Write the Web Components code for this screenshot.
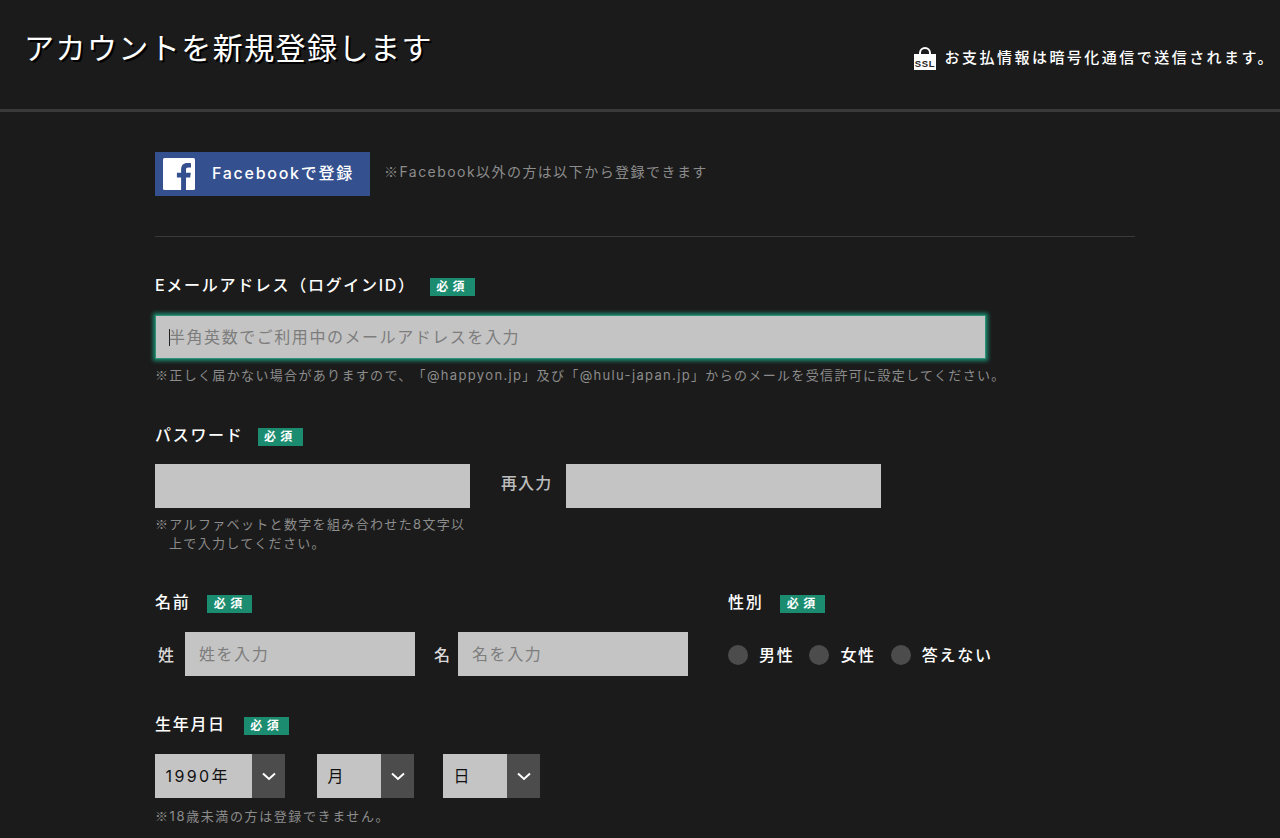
<!DOCTYPE html>
<html lang="ja"><head><meta charset="utf-8"><title>アカウントを新規登録します</title>
<style>
html,body{margin:0;background:#1b1b1b;height:838px;overflow:hidden}
body{font-family:Inter,"Noto Sans CJK JP","Liberation Sans",sans-serif;color:#fff;text-spacing-trim:space-all}
</style></head><body>
<signup-page></signup-page>
<script>
function def(name,css,html){
  customElements.define(name,class extends HTMLElement{
    connectedCallback(){
      if(this.shadowRoot)return;
      const r=this.attachShadow({mode:'open'});
      r.innerHTML='<style>'+css+'</style>'+html;
    }
  });
}
def('req-badge',`:host{display:inline-flex;align-items:center;justify-content:center;box-sizing:border-box;width:45px;height:18px;padding-right:3px;background:#1c8c70;color:#fff;font-size:12px;font-weight:700;letter-spacing:.8px;line-height:18px;flex:none}`,'必 須');
def('field-label',`:host{display:flex;align-items:center;height:18px;font-size:16px;font-weight:500;letter-spacing:1.7px;color:#fff;white-space:nowrap}
span{margin-bottom:6px}
req-badge{margin-left:var(--gap,14px)}`,`<span><slot></slot></span><req-badge></req-badge>`);
def('hint-text',`:host{display:block;font-size:13px;line-height:19px;letter-spacing:1.34px;color:#8c8c8c;white-space:nowrap}`,`<slot></slot>`);
def('text-field',`:host{display:flex;align-items:center;box-sizing:border-box;height:44px;background:#c4c4c4;color:#7d7d7d;font-size:16px;letter-spacing:1.55px;padding-left:14px;white-space:nowrap;flex:none}
:host([focused]){border:1px solid #2b9378;box-shadow:0 0 4px 2px rgba(28,140,112,.95);padding-left:13px}
span{margin-bottom:2px}
.caret{display:none;width:1px;height:17px;background:#222;margin:0 -1px 0 0}
:host([focused]) .caret{display:block}`,`<i class="caret"></i><span><slot></slot></span>`);
def('radio-opt',`:host{display:flex;align-items:center;font-size:16px;font-weight:500;letter-spacing:1.7px;white-space:nowrap}
i{width:20px;height:20px;border-radius:50%;background:#4c4c4c;margin-right:11px}
span{margin-bottom:2px}`,`<i></i><span><slot></slot></span>`);
def('select-box',`:host{display:flex;height:44px;flex:none;background:#c4c4c4;color:#111;font-size:16px;letter-spacing:2.4px}
.v{flex:1;display:flex;align-items:center;padding-left:10.500px;white-space:nowrap}
.v span{margin-bottom:3px}
.a{width:33px;background:#4c4c4c;display:flex;align-items:center;justify-content:center}`,
`<div class="v"><span><slot></slot></span></div><div class="a"><svg width="14" height="9" viewBox="0 0 14 9"><path d="M1 1.500 7 7l6-5.500" fill="none" stroke="#fff" stroke-width="2"/></svg></div>`);
def('fb-button',`:host{display:flex;align-items:center;width:215px;height:44px;background:#34508f;color:#fff;font-size:16px;letter-spacing:1.72px;font-weight:500;flex:none;white-space:nowrap}
svg{margin:0 17px 0 8px;flex:none}
span{margin-bottom:4px}`,
`<svg width="32" height="32" viewBox="0 0 32 32"><rect width="32" height="32" rx="1.500" fill="#fff"/><path transform="translate(1 0)" d="M22 32V19.600h4.200l.6-4.800H22v-3c0-1.400.4-2.300 2.400-2.300H27V5.200c-.5-.1-2-.2-3.700-.2-3.700 0-6.200 2.200-6.200 6.400v3.400h-4.200v4.800h4.200V32z" fill="#34508f"/></svg><span><slot></slot></span>`);
def('site-header',`:host{display:flex;justify-content:space-between;box-sizing:border-box;height:112px;border-bottom:3px solid #3a3a3a;padding:0 5px 0 24px}
h1{margin:26px 0 0;font-size:30px;font-weight:400;line-height:44px;letter-spacing:1.45px;color:#fff;text-shadow:2px 2px 0 #000;white-space:nowrap}
.ssl{display:flex;align-items:flex-start;margin-top:47px;font-size:15px;font-weight:500;letter-spacing:2.47px;line-height:22px;white-space:nowrap}
svg{margin-right:9px;flex:none}`,
`<h1>アカウントを新規登録します</h1><div class="ssl"><svg width="22" height="23" viewBox="0 0 22 23"><path d="M6 8V6a5 5 0 0 1 10 0v2" fill="none" stroke="#fff" stroke-width="2"/><rect y="7" width="22" height="16" fill="#fff"/><text x="11" y="19.500" text-anchor="middle" font-family="Liberation Sans" font-weight="700" font-size="9.500" letter-spacing=".6" fill="#222">SSL</text></svg><span>お支払情報は暗号化通信で送信されます。</span></div>`);
def('signup-page',`:host{display:block}
main{padding:40px 0 0 155px;width:980px}
.fb{display:flex;align-items:center;gap:14px;height:44px;color:#8c8c8c;font-size:14px;letter-spacing:1.45px;white-space:nowrap}
.fb>span{margin-bottom:6px}
.m{font-family:"Noto Sans CJK JP",sans-serif;line-height:0}
hr{border:0;height:1px;background:#3a3a3a;margin:40px 0 41px}
.row{display:flex;align-items:center}
.mt-n{margin-top:7px}
.re{font-size:16px;font-weight:500;letter-spacing:1.1px;color:#bdbdbd;margin:0 14px 8px 31px;white-space:nowrap}
.nm{font-size:16px;font-weight:500;color:#d8d8d8;white-space:nowrap}
.cols{display:flex}
.left{width:573px}
.indent{padding-left:14px;display:block}
.name-row{display:flex;align-items:center;margin-top:19px;height:44px}
.rad{display:flex;align-items:center;height:44px;margin:20px 0 -1px}`,
`<site-header></site-header>
<main>
  <div class="fb"><fb-button>Facebookで登録</fb-button><span><span class="m">※</span>Facebook以外の方は以下から登録できます</span></div>
  <hr>
  <field-label>Eメールアドレス（ログインID）</field-label>
  <text-field focused style="width:831px;margin-top:19px">半角英数でご利用中のメールアドレスを入力</text-field>
  <hint-text class="mt-n"><span class="m">※</span>正しく届かない場合がありますので、「@happyon.jp」及び「@hulu-japan.jp」からのメールを受信許可に設定してください。</hint-text>
  <field-label style="--gap:14px;margin-top:43px">パスワード</field-label>
  <div class="row" style="margin-top:18px"><text-field style="width:315px"></text-field><span class="re">再入力</span><text-field style="width:315px"></text-field></div>
  <hint-text class="mt-n"><span class="m">※</span>アルファベットと数字を組み合わせた8文字以<span class="indent">上で入力してください。</span></hint-text>
  <div class="cols" style="margin-top:42px">
    <div class="left">
      <field-label style="--gap:17px">名前</field-label>
      <div class="name-row"><span class="nm" style="margin:0 11px 0 3px">姓</span><text-field style="width:230px">姓を入力</text-field><span class="nm" style="margin:0 8px 0 19px">名</span><text-field style="width:230px">名を入力</text-field></div>
    </div>
    <div>
      <field-label style="--gap:17px">性別</field-label>
      <div class="rad"><radio-opt style="margin-right:15px">男性</radio-opt><radio-opt style="margin-right:15px">女性</radio-opt><radio-opt>答えない</radio-opt></div>
    </div>
  </div>
  <field-label style="--gap:18px;margin-top:41px">生年月日</field-label>
  <div class="row" style="margin-top:19px"><select-box style="width:130px">1990年</select-box><select-box style="width:97px;margin-left:32px">月</select-box><select-box style="width:97px;margin-left:29px">日</select-box></div>
  <hint-text style="margin-top:9px;letter-spacing:1.6px"><span class="m">※</span>18歳未満の方は登録できません。</hint-text>
</main>`);
</script>
</body></html>
